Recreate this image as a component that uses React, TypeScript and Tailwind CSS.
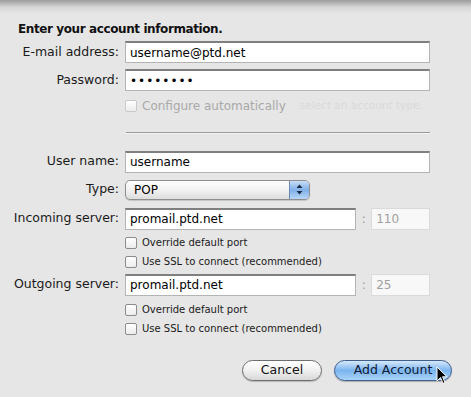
import React from 'react';

const font = { fontFamily: '"DejaVu Sans", "Liberation Sans", sans-serif' };

const Field = ({ label, children }: { label: string; children: React.ReactNode }) => (
  <div className="flex items-center">
    <div className="w-[125px] shrink-0 whitespace-nowrap pr-[6px] text-right text-[12.5px] text-[#1a1a1a]">{label}</div>
    {children}
  </div>
);

const TextBox = ({ value, className = '' }: { value: string; className?: string }) => (
  <div
    className={`flex h-[22px] items-center border border-[#b4b4b4] border-t-[#7f7f7f] border-t-2 bg-white pl-[4px] text-[12px] text-black ${className}`}
  >
    {value}
  </div>
);

const Check = ({ label, dim = false }: { label: string; dim?: boolean }) => (
  <div className="flex h-[13px] shrink-0 items-center whitespace-nowrap pl-[125px] leading-none">
    <div
      className={`h-[12px] w-[12px] rounded-[2px] border bg-gradient-to-b from-white to-[#ececec] ${dim ? 'border-[#c9c9c9]' : 'border-[#8c8c8c]'}`}
    />
    <span className={`pl-[5px] ${dim ? 'text-[12px] text-[#a9a9a9]' : 'text-[10px] text-[#1a1a1a]'}`}>{label}</span>
  </div>
);

const ServerRow = ({ label, server, port }: { label: string; server: string; port: string }) => (
  <Field label={label}>
    <TextBox value={server} className="w-[232px]" />
    <span className="w-[15px] text-center text-[12px] text-[#9a9a9a]">:</span>
    <div className="flex h-[22px] w-[59px] items-center border border-[#dadada] bg-[#f8f8f8] pl-[4px] text-[12px] text-[#a0a0a0]">
      {port}
    </div>
  </Field>
);

export default function App() {
  return (
    <div className="relative h-[397px] w-[471px] overflow-hidden bg-[#e6e6e6]" style={font}>
      <div className="h-[14px] bg-gradient-to-b from-[#9c9c9c] via-[#d6d6d6] to-[#e6e6e6]" />
      <div className="flex flex-col pr-[41px]">
        <div className="mt-[6px] pl-[18px] text-[12px] font-bold tracking-[-0.4px] text-[#111]">Enter your account information.</div>
        <div className="mt-[3px]">
          <Field label="E-mail address:">
            <TextBox value="username@ptd.net" className="flex-1" />
          </Field>
        </div>
        <div className="mt-[6px]">
          <Field label="Password:">
            <TextBox value="••••••••" className="flex-1 tracking-[1px]" />
          </Field>
        </div>
        <div className="mt-[7px] flex items-center whitespace-nowrap">
          <Check label="Configure automatically" dim />
          <span className="pl-[14px] text-[10.5px] text-[#dadada]">select an account type.</span>
        </div>
        <div className="ml-[126px] mt-[18px] h-[2px] border-t border-[#9a9a9a] border-b-[#f4f4f4] border-b" />
        <div className="mt-[17px]">
          <Field label="User name:">
            <TextBox value="username" className="flex-1" />
          </Field>
        </div>
        <div className="mt-[7px]">
          <Field label="Type:">
            <div className="flex h-[20px] w-[185px] items-stretch overflow-hidden rounded-[5px] border border-[#8e8e8e] bg-gradient-to-b from-white via-[#f2f2f2] to-[#dcdcdc] shadow-[0_1px_1px_rgba(0,0,0,0.15)]">
              <span className="flex flex-1 items-center pl-[8px] text-[12px] text-black">POP</span>
              <div className="flex w-[20px] flex-col items-center justify-center border-l border-[#6a8bb8] bg-gradient-to-b from-[#c7ddf5] via-[#7fb0e8] to-[#b9d7f7]">
                <svg width="7" height="11" viewBox="0 0 7 11">
                  <path d="M3.5 0.5 L6.5 4 L0.5 4 Z" fill="#1c2a44" />
                  <path d="M3.5 10.5 L6.5 7 L0.5 7 Z" fill="#1c2a44" />
                </svg>
              </div>
            </div>
          </Field>
        </div>
        <div className="mt-[8px]">
          <ServerRow label="Incoming server:" server="promail.ptd.net" port="110" />
        </div>
        <div className="mt-[7px]">
          <Check label="Override default port" />
        </div>
        <div className="mt-[6px]">
          <Check label="Use SSL to connect (recommended)" />
        </div>
        <div className="mt-[5px]">
          <ServerRow label="Outgoing server:" server="promail.ptd.net" port="25" />
        </div>
        <div className="mt-[8px]">
          <Check label="Override default port" />
        </div>
        <div className="mt-[6px]">
          <Check label="Use SSL to connect (recommended)" />
        </div>
      </div>
      <div className="mt-[24px] flex justify-end gap-[12px] pr-[19px]">
        <button className="h-[21px] w-[80px] rounded-full border border-[#6e6e6e] bg-gradient-to-b from-white via-[#f0f0f0] to-[#d8d8d8] text-[12.5px] text-[#111] shadow-[0_1px_1px_rgba(0,0,0,0.2)]">
          Cancel
        </button>
        <button className="h-[21px] w-[118px] rounded-full border border-[#3e5f8f] bg-gradient-to-b from-[#d6e9fb] via-[#7ab4ee] to-[#a9d3fa] text-[12.5px] text-[#0d1a33] shadow-[0_1px_1px_rgba(0,0,0,0.25)]">
          Add Account
        </button>
      </div>
      <svg className="absolute left-[436px] top-[366px]" width="12" height="19" viewBox="0 0 12 19">
        <path d="M1 1 L1 15 L4.5 11.5 L7 17.5 L9 16.6 L6.6 10.8 L11 10.8 Z" fill="#000" stroke="#fff" strokeWidth="1" />
      </svg>
    </div>
  );
}
